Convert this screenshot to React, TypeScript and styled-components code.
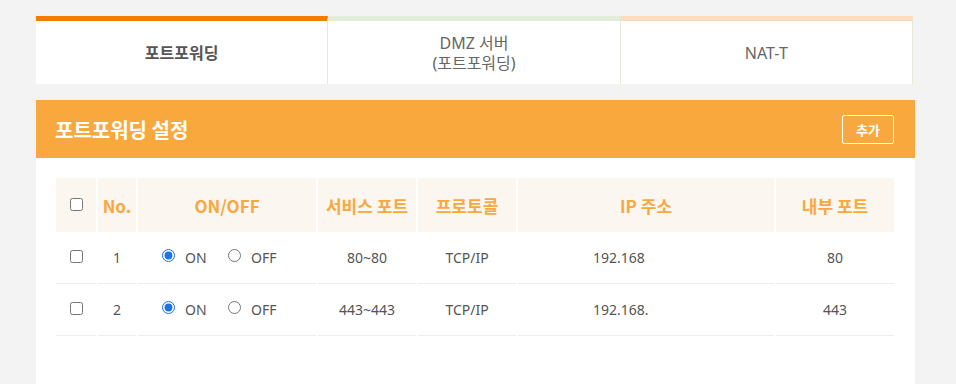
import React from 'react';
import styled, { createGlobalStyle } from 'styled-components';

const GlobalStyle = createGlobalStyle`
  body {
    margin: 0;
    background: #f3f3f3;
    font-family: "Noto Sans", "Noto Sans CJK KR", sans-serif;
    color: #555;
  }
`;

const Page = styled.div({
  padding: "16px 41px 0 36px",
  display: "flex",
  flexDirection: "column",
  gap: "16px",
});

const TabBar = styled.div({
  display: "flex",
  width: "877px",
});

const Tab = styled.div<{ $top: string; $active?: boolean }>(({ $top, $active }) => ({
  flex: 1,
  height: "63px",
  background: "#fff",
  borderTop: `5px solid ${$top}`,
  borderRight: "1px solid #e6e8d8",
  display: "flex",
  alignItems: "center",
  justifyContent: "center",
  textAlign: "center",
  fontSize: "16px",
  lineHeight: "20px",
  fontWeight: $active ? 700 : 400,
  color: $active ? "#555" : "#666",
}));

const Panel = styled.section({
  width: "879px",
  background: "#fff",
  minHeight: "300px",
});

const PanelHeader = styled.header({
  height: "58px",
  background: "#f9a83e",
  display: "flex",
  alignItems: "center",
  justifyContent: "space-between",
  padding: "0 21px 0 19px",
});

const PanelTitle = styled.h2({
  margin: 0,
  color: "#fff",
  fontSize: "20px",
  fontWeight: 700,
  fontFamily: "\"Noto Sans CJK KR\", sans-serif",
});

const AddButton = styled.button({
  width: "52px",
  height: "29px",
  background: "transparent",
  border: "1px solid #fff",
  borderRadius: "2px",
  color: "#fff",
  fontSize: "13px",
  fontWeight: 700,
  fontFamily: "\"Noto Sans CJK KR\", sans-serif",
  cursor: "pointer",
});

const Body = styled.div({
  padding: "20px 19px 40px 18px",
});

const Table = styled.table({
  borderCollapse: "separate",
  borderSpacing: "2px 0",
  tableLayout: "fixed",
  width: "842px",
});

const HeadCell = styled.th<{ $w: number }>(({ $w }) => ({
  width: `${$w}px`,
  height: "54px",
  padding: 0,
  background: "#fbf6f0",
  color: "#f9a83e",
  fontSize: "17px",
  fontWeight: 700,
  fontFamily: "\"Noto Sans CJK KR\", sans-serif",
  textAlign: "center",
}));

const Cell = styled.td<{ $pad?: number }>(({ $pad }) => ({
  height: "51px",
  padding: $pad ? `0 0 0 ${$pad}px` : 0,
  borderBottom: "1px solid #eeeeee",
  fontSize: "14px",
  color: "#555",
  textAlign: $pad ? "left" : "center",
}));

const Check = styled.input.attrs({ type: "checkbox" })({
  display: "block",
  width: "13px",
  height: "13px",
  margin: "0 auto",
  position: "relative",
  top: "-1px",
});

const RadioGroup = styled.div({
  display: "flex",
  alignItems: "center",
  paddingLeft: "24px",
});

const RadioLabel = styled.label({
  display: "flex",
  alignItems: "center",
  width: "66px",
  gap: "10px",
  fontSize: "14px",
});

const Radio = styled.input.attrs({ type: "radio" })({
  width: "13px",
  height: "13px",
  margin: "0",
  position: "relative",
  top: "-2px",
  accentColor: "#1a73e8",
});

const rows = [
  { no: 1, svc: "80~80", proto: "TCP/IP", ip: "192.168", inner: "80" },
  { no: 2, svc: "443~443", proto: "TCP/IP", ip: "192.168.", inner: "443" },
];

function App() {
  return (
    <>
      <GlobalStyle />
      <Page>
        <TabBar>
          <Tab $top="#f57c00" $active>포트포워딩</Tab>
          <Tab $top="#e1ecd9">DMZ 서버<br />(포트포워딩)</Tab>
          <Tab $top="#fddcbd">NAT-T</Tab>
        </TabBar>

        <Panel>
          <PanelHeader>
            <PanelTitle>포트포워딩 설정</PanelTitle>
            <AddButton>추가</AddButton>
          </PanelHeader>
          <Body>
            <Table>
              <thead>
                <tr>
                  <HeadCell $w={40}><Check /></HeadCell>
                  <HeadCell $w={38}>No.</HeadCell>
                  <HeadCell $w={178}>ON/OFF</HeadCell>
                  <HeadCell $w={98}>서비스 포트</HeadCell>
                  <HeadCell $w={98}>프로토콜</HeadCell>
                  <HeadCell $w={256}>IP 주소</HeadCell>
                  <HeadCell $w={118}>내부 포트</HeadCell>
                </tr>
              </thead>
              <tbody>
                {rows.map((r) => (
                  <tr key={r.no}>
                    <Cell><Check /></Cell>
                    <Cell>{r.no}</Cell>
                    <Cell>
                      <RadioGroup>
                        <RadioLabel>
                          <Radio name={`on${r.no}`} defaultChecked /> ON
                        </RadioLabel>
                        <RadioLabel>
                          <Radio name={`on${r.no}`} /> OFF
                        </RadioLabel>
                      </RadioGroup>
                    </Cell>
                    <Cell>{r.svc}</Cell>
                    <Cell>{r.proto}</Cell>
                    <Cell $pad={75}>{r.ip}</Cell>
                    <Cell>{r.inner}</Cell>
                  </tr>
                ))}
              </tbody>
            </Table>
          </Body>
        </Panel>
      </Page>
    </>
  );
}

export default App;
